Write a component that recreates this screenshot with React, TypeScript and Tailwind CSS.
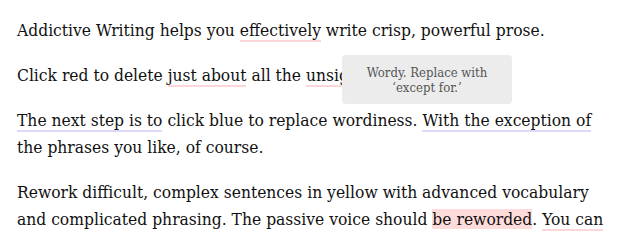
const serif = "font-['DejaVu_Serif_Condensed','DejaVu_Serif',Georgia,serif] font-stretch-condensed";

function Red({ children }: { children: React.ReactNode }) {
  return <span className="border-b-2 border-[#fdd6d9]">{children}</span>;
}

function Blue({ children }: { children: React.ReactNode }) {
  return <span className="border-b-2 border-[#dcdafc]">{children}</span>;
}

export default function App() {
  return (
    <div className={`relative h-[237px] overflow-hidden bg-white pl-[17px] pt-[17px] ${serif}`}>
      <div className="w-[610px] text-[17.3px] leading-[27px] text-[#111]">
        <p className="mb-[18px]">
          Addictive Writing helps you <Red>effectively</Red> write crisp, powerful prose.
        </p>
        <p className="mb-[18px]">
          Click red to delete <Red>just about</Red> all the <Red>unsignificant</Red> words.
        </p>
        <p className="mb-[18px]">
          <Blue>The next step is to</Blue> click blue to replace wordiness.{' '}
          <Blue>With the exception of</Blue>
          <br />
          the phrases you like, of course.
        </p>
        <p>
          Rework difficult, complex sentences in yellow with advanced vocabulary
          <br />
          and complicated phrasing. The passive voice should{' '}
          <span className="bg-[#ffdcdc]">be reworded</span>. <Red>You can</Red>
        </p>
      </div>

      {/* tooltip */}
      <div className="absolute left-[342px] top-[55px] flex h-[49px] w-[170px] flex-col items-center justify-center rounded-[4px] bg-[#ececec] text-center text-[13px] leading-[15px] text-[#555]">
        <span>Wordy. Replace with</span>
        <span>‘except for.’</span>
      </div>
    </div>
  );
}
